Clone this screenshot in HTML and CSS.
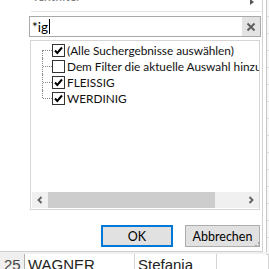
FILE: index.html
```html
<!DOCTYPE html>
<html lang="de">
<head>
<meta charset="utf-8">
<link rel="stylesheet" href="styles.css">
</head>
<body>
<div class="screen">
  <div class="dialog">
    <div class="menuhead">
      <span class="menutitle">Textfilter</span>
      <span class="subarrow"></span>
    </div>
    <div class="search">
      <span class="query">*ig</span><span class="caret"></span>
      <span class="clear"><svg width="10" height="10" viewBox="0 0 10 10"><path d="M1.5 1.5 L8.5 8.5 M8.5 1.5 L1.5 8.5" stroke="#5f5f5f" stroke-width="2"/></svg></span>
    </div>
    <div class="list">
      <div class="tree">
        <div class="row first"><span class="conn"></span><span class="cb"><svg width="11" height="11" viewBox="0 0 11 11"><path d="M2 5.5 L4.3 8 L9 2.5" fill="none" stroke="#000" stroke-width="2"/></svg></span><span class="label">(Alle Suchergebnisse auswählen)</span></div>
        <div class="row"><span class="conn"></span><span class="cb"></span><span class="label">Dem Filter die aktuelle Auswahl hinzufügen</span></div>
        <div class="row"><span class="conn"></span><span class="cb"><svg width="11" height="11" viewBox="0 0 11 11"><path d="M2 5.5 L4.3 8 L9 2.5" fill="none" stroke="#000" stroke-width="2"/></svg></span><span class="label">FLEISSIG</span></div>
        <div class="row last"><span class="conn"></span><span class="cb"><svg width="11" height="11" viewBox="0 0 11 11"><path d="M2 5.5 L4.3 8 L9 2.5" fill="none" stroke="#000" stroke-width="2"/></svg></span><span class="label">WERDINIG</span></div>
      </div>
      <div class="hscroll">
        <span class="sbtn"><svg width="8" height="8" viewBox="0 0 8 8"><path d="M5.5 1 L2.5 4 L5.5 7" fill="none" stroke="#606060" stroke-width="1.8"/></svg></span>
        <span class="thumb"></span>
        <span class="track"></span>
        <span class="sbtn"><svg width="8" height="8" viewBox="0 0 8 8"><path d="M2.5 1 L5.5 4 L2.5 7" fill="none" stroke="#606060" stroke-width="1.8"/></svg></span>
      </div>
    </div>
    <div class="buttons">
      <span class="btn ok">OK</span>
      <span class="btn">Abbrechen</span>
    </div>
    <span class="grip"><svg width="7" height="7" viewBox="0 0 7 7"><rect x="5" y="0" width="2" height="2" fill="#a8a8a8"/><rect x="2" y="3" width="2" height="2" fill="#a8a8a8"/><rect x="5" y="3" width="2" height="2" fill="#a8a8a8"/></svg></span>
  </div>
  <div class="side">
    <div class="cell"></div><div class="cell"></div><div class="cell"></div><div class="cell"></div><div class="cell"></div><div class="cell"></div><div class="cell"></div><div class="cell"></div><div class="cell"></div><div class="cell"></div><div class="cell"></div><div class="cell"></div><div class="cell"></div><div class="cell"></div><div class="cell"></div>
  </div>
  <div class="sheetrow">
    <span class="rowhead">25</span>
    <span class="scell wide">WAGNER</span>
    <span class="scell mid">Stefania</span>
    <span class="scell"></span>
  </div>
</div>
</body>
</html>
```

FILE: styles.css
```css
html, body {
  margin: 0;
  padding: 0;
  background: #fff;
  overflow: hidden;
}
.screen {
  width: 269px;
  height: 269px;
  display: grid;
  grid-template-columns: 263px 6px;
  grid-template-rows: 252px 17px;
  overflow: hidden;
  font-family: Lato, "Noto Sans", sans-serif;
  font-size: 12.5px;
  color: #1a1a1a;
}
.dialog {
  position: relative;
  background: #fff;
  border-right: 1px solid #d2d2d2;
  border-bottom: 1px solid #cfcfcf;
  overflow: hidden;
  display: flex;
  flex-direction: column;
}
.menuhead {
  margin-top: -10px;
  height: 21px;
  margin-left: 31px;
  border-bottom: 1px solid #e2e2e2;
  display: flex;
  justify-content: space-between;
  line-height: 14px;
  color: #7a7a7a;
}
.menutitle {
  padding-left: 1px;
}
.subarrow {
  width: 0;
  height: 0;
  margin-top: 9px;
  margin-right: 8px;
  border-left: 4px solid #555;
  border-top: 3px solid transparent;
  border-bottom: 3px solid transparent;
}
.search {
  margin-top: 4px;
  margin-left: 29px;
  width: 232px;
  height: 21px;
  box-sizing: border-box;
  border: 1px solid #a9a9a9;
  display: flex;
  align-items: center;
}
.query {
  padding-left: 2px;
  font-size: 13.5px;
  color: #000;
}
.caret {
  width: 1px;
  height: 15px;
  margin-left: 1px;
  background: #000;
}
.clear {
  margin-left: auto;
  width: 18px;
  height: 19px;
  background: #e3e3e3;
  display: flex;
  align-items: center;
  justify-content: center;
}
.list {
  margin-top: 3px;
  margin-left: 30px;
  width: 230px;
  height: 170px;
  box-sizing: border-box;
  border: 1px solid #d6d6d6;
  display: flex;
  flex-direction: column;
  overflow: hidden;
}
.tree {
  flex: 1;
  padding-top: 1px;
  overflow: hidden;
}
.row {
  height: 16px;
  display: flex;
  align-items: center;
  white-space: nowrap;
}
.conn {
  position: relative;
  flex: 0 0 21px;
  height: 16px;
}
.conn::before {
  content: "";
  position: absolute;
  left: 12px;
  top: 8px;
  width: 9px;
  border-top: 1px dotted #8a8a8a;
}
.conn::after {
  content: "";
  position: absolute;
  left: 11px;
  top: 0;
  height: 16px;
  border-left: 1px dotted #8a8a8a;
}
.first .conn::after {
  top: 8px;
  height: 8px;
}
.last .conn::after {
  height: 8px;
}
.cb {
  flex: 0 0 13px;
  height: 13px;
  box-sizing: border-box;
  border: 1px solid #333;
  background: #fff;
  display: flex;
  align-items: center;
  justify-content: center;
}
.label {
  margin-left: 2px;
  font-size: 11.8px;
  color: #111;
}
.hscroll {
  height: 16px;
  margin: 0 0 1px 1px;
  display: flex;
  background: #f0f0f0;
}
.sbtn {
  flex: 0 0 16px;
  display: flex;
  align-items: center;
  justify-content: center;
}
.thumb {
  flex: 0 0 167px;
  background: #cdcdcd;
}
.track {
  flex: 1;
}
.buttons {
  margin-top: 15px;
  margin-left: 101px;
  display: flex;
  gap: 12px;
}
.btn {
  height: 22px;
  box-sizing: border-box;
  border: 1px solid #adadad;
  background: #e1e1e1;
  display: flex;
  align-items: center;
  justify-content: center;
  width: 75px;
  color: #000;
}
.btn.ok {
  width: 72px;
  border: 2px solid #0078d7;
}
.grip {
  position: absolute;
  right: 2px;
  bottom: 2px;
  width: 7px;
  height: 7px;
  line-height: 0;
}
.side {
  display: flex;
  flex-direction: column;
  padding-left: 3px;
}
.side .cell {
  flex: 0 0 17px;
  box-sizing: border-box;
  border-left: 1px solid #c8c8c8;
  border-bottom: 1px solid #dadada;
  background: #f7f7f7;
}
.sheetrow {
  grid-column: 1 / 3;
  display: flex;
  border-top: 2px solid #f0f0f0;
  font-family: "Liberation Sans", Arial, sans-serif;
  font-size: 15px;
  line-height: 22px;
  color: #222;
  overflow: hidden;
}
.rowhead {
  flex: 0 0 25px;
  box-sizing: border-box;
  padding-left: 4px;
  background: #efefef;
  border-right: 1px solid #b0b0b0;
  color: #444;
}
.scell {
  box-sizing: border-box;
  padding-left: 3px;
  border-right: 1px solid #d4d4d4;
  flex: 1;
}
.scell.wide {
  flex: 0 0 110px;
}
.scell.mid {
  flex: 0 0 82px;
}
```
